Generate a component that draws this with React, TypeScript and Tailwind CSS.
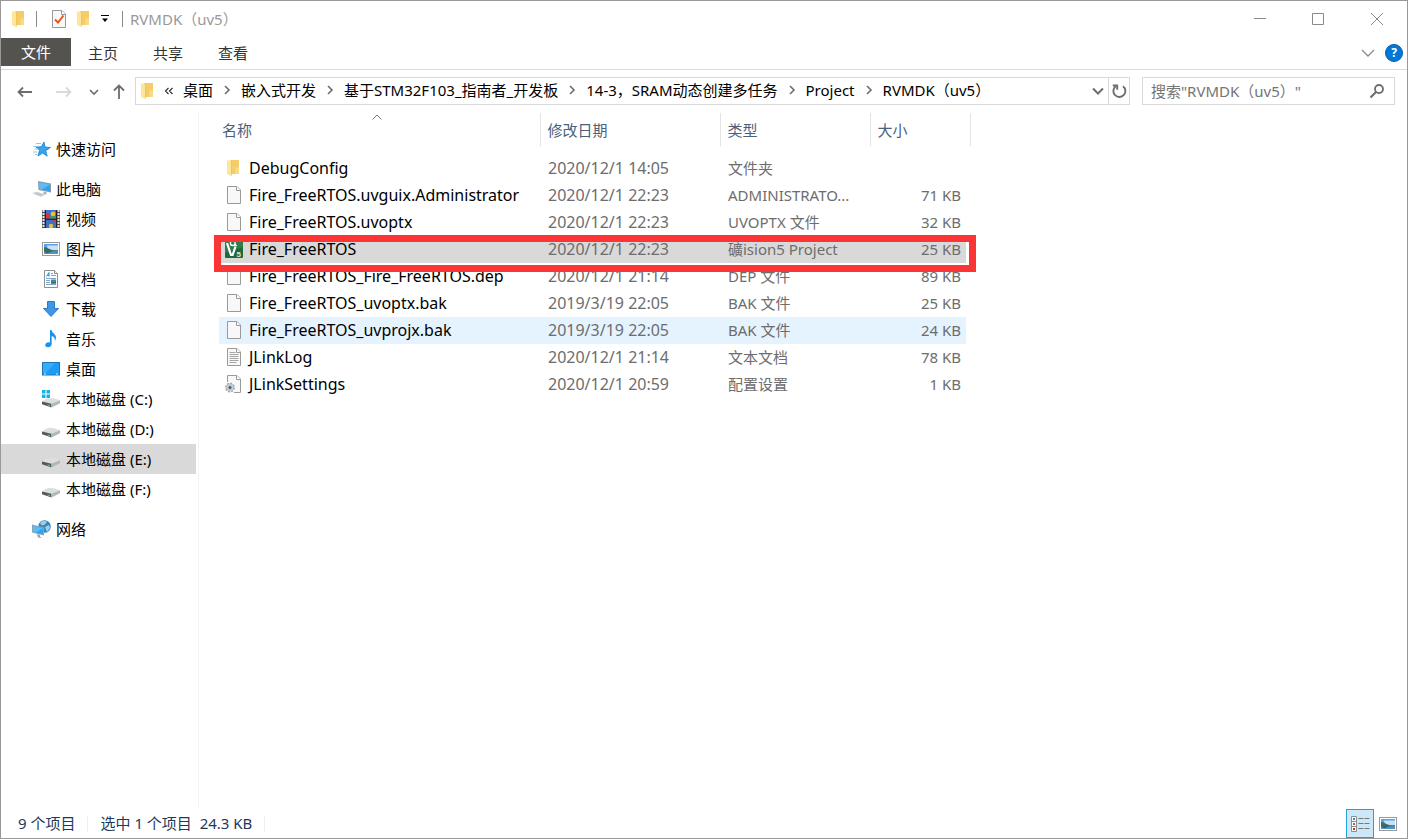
import { Fragment } from 'react';
import type { ReactNode } from 'react';
import { clsx } from 'clsx';

type IconProps = { className?: string };

function FolderIcon({ className }: IconProps) {
  return (
    <svg viewBox="0 0 18 18" className={clsx('h-[18px] w-[18px] shrink-0', className)} aria-hidden="true">
      <path d="M5 1h9v13l-1 1H5z" fill="#f5cd68" />
      <path d="M10.5 8.500h3.500V15h-3.500z" fill="#f8da87" />
      <path d="M2 1l4 1.200V17l-4-2z" fill="#fde59b" />
      <path d="M6 2.200V17l.6-.6V2.400z" fill="#edbd50" />
    </svg>
  );
}

function SheetIcon({ children }: { children?: ReactNode }) {
  return (
    <svg viewBox="0 0 18 18" className="h-[18px] w-[18px] shrink-0" aria-hidden="true">
      <path d="M2.500.5h9.500l3.500 3.500v13.500h-13z" fill="#f8f8f8" stroke="#9a9a9a" />
      <path d="M11.500.5v4h4" fill="#fff" stroke="#9a9a9a" />
      {children}
    </svg>
  );
}

const TextSheetIcon = () => (
  <SheetIcon>
    <path d="M4.500 4.500h6M4.500 6.500h9M4.500 8.500h9M4.500 10.500h9M4.500 12.500h9M4.500 14.500h7" stroke="#a5a5a5" />
  </SheetIcon>
);

const ConfigSheetIcon = () => (
  <SheetIcon>
    <path d="M0 7h9v11H0z" fill="#fff" />
    <circle cx="5" cy="12.500" r="4" fill="#b9c2ca" stroke="#9aa5ad" strokeWidth="2" strokeDasharray="1.800 1.300" />
    <circle cx="5" cy="12.500" r="3.600" fill="#c3ccd3" />
    <circle cx="5" cy="12.500" r="1.500" fill="#4c5a66" />
  </SheetIcon>
);

function UVisionIcon() {
  return (
    <svg viewBox="0 0 18 18" className="h-[18px] w-[18px] shrink-0" aria-hidden="true">
      <rect width="18" height="18" rx="1" fill="#21683c" />
      <path d="M0 0h18v7L0 13z" fill="#2f7d4b" />
      <path d="M2 3l4 12h1.600L10.500 6.500" fill="none" stroke="#fff" strokeWidth="2.200" />
      <path d="M5.500 0v4c0 2 4.500 2 4.500 0V0m0 4l1.500 2" fill="none" stroke="#fff" strokeWidth="1.400" />
      <text x="11.500" y="16.500" fontSize="8" fontWeight="700" fill="#cfe8d8" fontFamily="Liberation Sans, sans-serif">
        5
      </text>
    </svg>
  );
}

function StarIcon() {
  return (
    <svg viewBox="0 0 20 18" className="h-[18px] w-5 shrink-0" aria-hidden="true">
      <path
        d="M12 2l1 5 5.500.5-4.800 3.200 1.500 5.500-4.500-3.200-4.800 3 1.600-5.500L4 7l5.200-.2z"
        fill="#35a4ee"
        stroke="#1c7fc8"
        strokeWidth="0.8"
      />
      <path d="M4 3.500h5M1.500 6.500h3M2.500 9h4M1 12h4.500M3 14.500h2" stroke="#8cc9f2" />
    </svg>
  );
}

function PcIcon() {
  return (
    <svg viewBox="0 0 20 18" className="h-[18px] w-5 shrink-0" aria-hidden="true">
      <path d="M6 1l13 2.500v9L6.500 10z" fill="#8d9aa5" />
      <path d="M7 2.300l11 2.100v6.900L7.300 9z" fill="#2aa3f0" />
      <path d="M7 2.300l11 2.100-8 5.200L7.300 9z" fill="#5bbcf7" />
      <path d="M11.500 11.400l3 .6v2.600l-3-.6z" fill="#a9b3ba" />
      <path d="M0 13l5-1.200 8.500 2.700L9 17z" fill="#d3d7da" />
      <path d="M2 13.400l7 2.200M4 12.700l7.500 2.200" stroke="#aeb5ba" strokeWidth="0.6" />
    </svg>
  );
}

function VideoIcon() {
  return (
    <svg viewBox="0 0 18 18" className="h-[18px] w-[18px] shrink-0" aria-hidden="true">
      <rect width="18" height="18" fill="#4a4a4a" />
      <path d="M1.500 0v18M16.500 0v18" stroke="#e4e4e4" strokeWidth="2" strokeDasharray="2 1" />
      <path d="M4 0h10v8.500H4zM4 10h10v8H4z" fill="#3d6fd0" />
      <path d="M4 4h4v4.500H4z" fill="#d0393b" />
      <circle cx="11" cy="4" r="2.400" fill="#e8c235" />
      <path d="M8 6.500h6v2H8z" fill="#4c9a46" />
      <circle cx="12" cy="11" r="1.400" fill="#d0393b" />
      <circle cx="9" cy="16" r="2.200" fill="#e8c235" />
      <path d="M3.500 0v18M14.500 0v18M4 9.300h10" stroke="#222" />
    </svg>
  );
}

function PictureIcon() {
  return (
    <svg viewBox="0 0 18 18" className="h-[18px] w-[18px] shrink-0" aria-hidden="true">
      <rect x="0.500" y="2.500" width="17" height="13" fill="#fff" stroke="#9a9a9a" />
      <path d="M2 4h14v10H2z" fill="#5aa2ea" />
      <path d="M5 5.500h11v4.500H6z" fill="#c5e2f8" />
      <path d="M2 7c3 .5 6 2.500 9 3.200l5 .3v1H2z" fill="#3f6d5c" />
      <path d="M2 11.400h14V14H2z" fill="#4f93bf" />
      <path d="M2 11.200h9L5 13z" fill="#2d5560" />
    </svg>
  );
}

function DocumentIcon() {
  return (
    <svg viewBox="0 0 18 18" className="h-[18px] w-[18px] shrink-0" aria-hidden="true">
      <path d="M2.500.5h10l3 3v14h-13z" fill="#fdfdfd" stroke="#8f8f8f" />
      <path d="M12.500.5v3h3" fill="#eee" stroke="#8f8f8f" />
      <path d="M4.500 6.500l2.500-4v4m-1.500-1.200h1.500" fill="none" stroke="#2a8bd4" />
      <path d="M9 3.500h2M9 5.500h5M4 8.500h10M4 10.500h4M4 12.500h4M4 14.500h10" stroke="#7aa7c9" />
      <path d="M9 9.500h5v4H9z" fill="#3a86b8" />
      <path d="M9 12h5v1.500H9z" fill="#386b56" />
    </svg>
  );
}

function DownloadIcon() {
  return (
    <svg viewBox="0 0 18 18" className="h-[18px] w-[18px] shrink-0" aria-hidden="true">
      <path d="M5.500 1.500h7v7h4L9 16.500 1.500 8.500h4z" fill="#3d96e6" stroke="#2f7cc4" />
    </svg>
  );
}

function MusicIcon() {
  return (
    <svg viewBox="0 0 18 18" className="h-[18px] w-[18px] shrink-0" aria-hidden="true">
      <path
        d="M8 0h1.500c.5 3 4.500 4 4.500 7.500 0 1.500-.6 2.500-1.200 3.300.4-3-1.300-4.300-3.100-4.800V14c0 2-1.800 3.300-3.800 3.300-1.600 0-2.700-.9-2.700-2.200 0-1.700 1.900-3 4.800-2.700z"
        fill="#1593ee"
      />
    </svg>
  );
}

function DesktopIcon() {
  return (
    <svg viewBox="0 0 18 18" className="h-[18px] w-[18px] shrink-0" aria-hidden="true">
      <rect x="0.500" y="2.500" width="17" height="12.500" fill="#1c9cf5" stroke="#1878bd" />
      <path d="M1 3h12L4 13H1z" fill="#3aabf8" />
      <path d="M2 14h14" stroke="#d5ecfb" strokeDasharray="2 10 2" />
    </svg>
  );
}

function DriveIcon({ system = false }: { system?: boolean }) {
  return (
    <svg viewBox="0 0 18 18" className="h-[18px] w-[18px] shrink-0" aria-hidden="true">
      <path d="M0 11.500c2-1.800 5-3.500 7.500-3.800 3 0 8 1.400 10.500 2.600L9.500 14z" fill="#dcdedf" />
      <path d="M0 11.500L9.500 13.700v3.800L0 14.300z" fill="#55575a" />
      <path d="M9.500 13.700L18 10.300v3l-8.500 4.200z" fill="#b4b7b9" />
      <path d="M5.500 14.200l2.500.7v1.200l-2.500-.7z" fill="#55d46a" />
      {system && (
        <>
          <path d="M0 0h9v8.500H0z" fill="#fff" />
          <path d="M0 0h3.500v3.500H0zM4.500 0H8v3.500H4.500zM0 4.500h3.500V8H0zM4.500 4.500H8V8H4.500z" fill="#12b2ee" />
        </>
      )}
    </svg>
  );
}

function NetworkIcon() {
  return (
    <svg viewBox="0 0 20 18" className="h-[18px] w-5 shrink-0" aria-hidden="true">
      <circle cx="12.500" cy="6.500" r="6.300" fill="#3c87b4" />
      <path d="M8 3c2-2.500 5-2.500 7-1.500l-2 3-3 1zM13 7l4-2 1 3-3 4z" fill="#9fd0e6" />
      <path d="M0 4.500l12 3v8L0 12.500z" fill="#8fa3b3" />
      <path d="M1 5.800l10 2.500v5.900L1 11.700z" fill="#2aa3f0" />
      <path d="M1 5.800l10 2.500-7 4.100-3-.7z" fill="#5bbcf7" />
      <path d="M5 14l3 .8v1.700l2 1.200H6z" fill="#9aa5ad" />
    </svg>
  );
}

function Chevron({ className, direction = 'down' }: IconProps & { direction?: 'down' | 'right' }) {
  return (
    <svg viewBox="0 0 10 10" className={clsx('h-[10px] w-[10px] shrink-0', className)} fill="none" stroke="currentColor" aria-hidden="true">
      {direction === 'down' ? <path d="M1 3l4 4 4-4" /> : <path d="M3 1l4 4-4 4" />}
    </svg>
  );
}

const tabs = ['主页', '共享', '查看'];
const crumbs = ['桌面', '嵌入式开发', '基于STM32F103_指南者_开发板', '14-3，SRAM动态创建多任务', 'Project', 'RVMDK（uv5）'];

const places: { label: string; icon: ReactNode; current?: boolean }[] = [
  { label: '视频', icon: <VideoIcon /> },
  { label: '图片', icon: <PictureIcon /> },
  { label: '文档', icon: <DocumentIcon /> },
  { label: '下载', icon: <DownloadIcon /> },
  { label: '音乐', icon: <MusicIcon /> },
  { label: '桌面', icon: <DesktopIcon /> },
  { label: '本地磁盘 (C:)', icon: <DriveIcon system /> },
  { label: '本地磁盘 (D:)', icon: <DriveIcon /> },
  { label: '本地磁盘 (E:)', icon: <DriveIcon />, current: true },
  { label: '本地磁盘 (F:)', icon: <DriveIcon /> },
];

type FileRow = {
  name: string;
  date: string;
  type: string;
  size?: string;
  icon: ReactNode;
  state?: 'selected' | 'hover';
};

const files: FileRow[] = [
  { name: 'DebugConfig', date: '2020/12/1 14:05', type: '文件夹', icon: <FolderIcon /> },
  { name: 'Fire_FreeRTOS.uvguix.Administrator', date: '2020/12/1 22:23', type: 'ADMINISTRATO...', size: '71 KB', icon: <SheetIcon /> },
  { name: 'Fire_FreeRTOS.uvoptx', date: '2020/12/1 22:23', type: 'UVOPTX 文件', size: '32 KB', icon: <SheetIcon /> },
  { name: 'Fire_FreeRTOS', date: '2020/12/1 22:23', type: '礦ision5 Project', size: '25 KB', icon: <UVisionIcon />, state: 'selected' },
  { name: 'Fire_FreeRTOS_Fire_FreeRTOS.dep', date: '2020/12/1 21:14', type: 'DEP 文件', size: '89 KB', icon: <SheetIcon /> },
  { name: 'Fire_FreeRTOS_uvoptx.bak', date: '2019/3/19 22:05', type: 'BAK 文件', size: '25 KB', icon: <SheetIcon /> },
  { name: 'Fire_FreeRTOS_uvprojx.bak', date: '2019/3/19 22:05', type: 'BAK 文件', size: '24 KB', icon: <SheetIcon />, state: 'hover' },
  { name: 'JLinkLog', date: '2020/12/1 21:14', type: '文本文档', size: '78 KB', icon: <TextSheetIcon /> },
  { name: 'JLinkSettings', date: '2020/12/1 20:59', type: '配置设置', size: '1 KB', icon: <ConfigSheetIcon /> },
];

function TitleBar() {
  return (
    <header className="flex h-[37px] shrink-0 items-center pb-[2px]">
      <FolderIcon className="ml-[9px]" />
      <span className="ml-2 h-4 w-px bg-[#8a8a8a]" />
      <button type="button" aria-label="属性" className="ml-[13px]">
        <SheetIcon>
          <path d="M5 9.500l3 3 5.500-7" fill="none" stroke="#e8541a" strokeWidth="2" />
        </SheetIcon>
      </button>
      <button type="button" aria-label="新建文件夹" className="ml-[7px]">
        <FolderIcon />
      </button>
      <button type="button" aria-label="自定义快速访问工具栏" className="ml-2 text-black">
        <svg viewBox="0 0 8 8" className="h-2 w-2" aria-hidden="true">
          <path d="M0 .5h8" stroke="currentColor" />
          <path d="M1 3.500h6L4 7z" fill="currentColor" />
        </svg>
      </button>
      <span className="ml-[13px] h-4 w-px bg-[#8a8a8a]" />
      <h1 className="ml-[7px] text-[#999]">RVMDK（uv5）</h1>
      <div className="ml-auto flex h-full text-[#8a8a8a]">
        <button type="button" aria-label="最小化" className="flex w-[58px] items-center justify-center">
          <svg viewBox="0 0 12 12" className="h-3 w-3" aria-hidden="true">
            <path d="M0 5.500h12" stroke="currentColor" />
          </svg>
        </button>
        <button type="button" aria-label="最大化" className="flex w-[58px] items-center justify-center">
          <svg viewBox="0 0 12 12" className="h-3 w-3" aria-hidden="true">
            <path d="M.5.5h11v11H.5z" fill="none" stroke="currentColor" />
          </svg>
        </button>
        <button type="button" aria-label="关闭" className="flex w-[60px] items-center justify-center">
          <svg viewBox="0 0 12 12" className="h-3 w-3" aria-hidden="true">
            <path d="M0 0l12 12M12 0L0 12" stroke="currentColor" />
          </svg>
        </button>
      </div>
    </header>
  );
}

function Ribbon() {
  return (
    <nav className="flex h-8 shrink-0 items-start border-b border-[#dadbdc] text-[#333]">
      <button type="button" className="h-7 w-[70px] bg-[#555350] text-white">
        文件
      </button>
      {tabs.map((tab) => (
        <button key={tab} type="button" className="h-[30px] w-[65px] pl-[17px] text-left">
          {tab}
        </button>
      ))}
      <div className="ml-auto flex h-[30px] items-center gap-[10px] pr-1">
        <button type="button" aria-label="展开功能区">
          <svg viewBox="0 0 14 8" className="h-2 w-[14px] text-[#8a8a8a]" fill="none" stroke="currentColor" strokeWidth="1.300" aria-hidden="true">
            <path d="M1 1l6 6 6-6" />
          </svg>
        </button>
        <button
          type="button"
          className="h-[18px] w-[18px] rounded-full border border-[#0a5aa8] bg-[#0078d7] text-xs leading-4 font-bold text-white"
        >
          ?
        </button>
      </div>
    </nav>
  );
}

function AddressRow() {
  return (
    <div className="flex h-[43px] shrink-0 items-start pt-[7px] pr-3 text-[#6d6d6d]">
      <div className="flex h-7 w-[134px] shrink-0 items-center pt-[2px] pl-4">
        <button type="button" aria-label="后退">
          <svg viewBox="0 0 16 14" className="h-[14px] w-4" fill="none" stroke="currentColor" strokeWidth="1.800" aria-hidden="true">
            <path d="M1.500 7H15M6 2.500L1.500 7l4.500 4.500" />
          </svg>
        </button>
        <button type="button" aria-label="前进" className="ml-[23px] text-[#d9d9d9]">
          <svg viewBox="0 0 16 14" className="h-[14px] w-4" fill="none" stroke="currentColor" strokeWidth="1.800" aria-hidden="true">
            <path d="M0 7h14.500M10 2.500L14.500 7 10 11.500" />
          </svg>
        </button>
        <button type="button" aria-label="最近位置" className="ml-[17px]">
          <Chevron className="stroke-[1.600]" />
        </button>
        <button type="button" aria-label="上移" className="ml-[13px]">
          <svg viewBox="0 0 14 16" className="h-4 w-[14px]" fill="none" stroke="currentColor" strokeWidth="1.800" aria-hidden="true">
            <path d="M7 1.500V15M2 6.500l5-5 5 5" />
          </svg>
        </button>
      </div>

      <div className="flex h-7 min-w-0 flex-1 items-center border border-[#d9d9d9] text-black">
        <FolderIcon className="ml-[3px]" />
        <svg viewBox="0 0 10 10" className="ml-[7px] h-[10px] w-[10px] shrink-0" fill="none" stroke="#333" strokeWidth="1.200" aria-hidden="true">
          <path d="M4.500 2L1.500 5l3 3M8.500 2L5.500 5l3 3" />
        </svg>
        <div className="ml-[9px] flex items-center pb-[2px] whitespace-nowrap">
          {crumbs.map((crumb, i) => (
            <Fragment key={crumb}>
              {i > 0 && (
                <span className="flex w-7 justify-center text-[#6d6d6d]">
                  <Chevron direction="right" className="stroke-[1.600]" />
                </span>
              )}
              <button type="button">{crumb}</button>
            </Fragment>
          ))}
        </div>
        <button type="button" aria-label="以前的位置" className="ml-auto pr-1 text-[#6d6d6d]">
          <svg viewBox="0 0 12 10" className="h-[10px] w-3" fill="none" stroke="currentColor" strokeWidth="2" aria-hidden="true">
            <path d="M1 2.500l5 5 5-5" />
          </svg>
        </button>
        <button
          type="button"
          aria-label="刷新"
          className="flex h-full w-[21px] items-center justify-center border-l border-[#d9d9d9] text-[#6d6d6d]"
        >
          <svg viewBox="0 0 16 16" className="h-4 w-4" fill="none" stroke="currentColor" strokeWidth="1.900" aria-hidden="true">
            <path d="M12 3.200a6 6 0 1 1-7.500.2M1.800 2.500h4.400v4.300" />
          </svg>
        </button>
      </div>

      <label className="ml-3 flex h-7 w-[253px] shrink-0 items-center border border-[#d9d9d9] px-2">
        <input
          type="text"
          aria-label="搜索"
          placeholder='搜索"RVMDK（uv5）"'
          className="min-w-0 flex-1 outline-none placeholder:text-[#757575]"
        />
        <svg viewBox="0 0 16 16" className="mr-px h-4 w-4" fill="none" stroke="currentColor" aria-hidden="true">
          <circle cx="10" cy="6" r="4" strokeWidth="1.800" />
          <path d="M7 9l-5.500 5.500" strokeWidth="2.200" />
        </svg>
      </label>
    </div>
  );
}

function Sidebar() {
  return (
    <nav className="w-[195px] shrink-0 pt-[21px] text-black">
      <a href="#quick" className="mb-[10px] flex h-[30px] items-center gap-1 pl-[31px]">
        <StarIcon />
        快速访问
      </a>
      <a href="#pc" className="flex h-[30px] items-center gap-1 pl-[31px]">
        <PcIcon />
        此电脑
      </a>
      {places.map((place) => (
        <a
          key={place.label}
          href="#place"
          aria-current={place.current ? 'location' : undefined}
          className={clsx('flex h-[30px] items-center gap-[6px] pl-[41px]', place.current && 'bg-[#d9d9d9]')}
        >
          {place.icon}
          {place.label}
        </a>
      ))}
      <a href="#network" className="mt-[10px] flex h-[30px] items-center gap-1 pl-[31px]">
        <NetworkIcon />
        网络
      </a>
    </nav>
  );
}

function FileList() {
  return (
    <main className="relative min-w-0 flex-1 pl-5">
      <table className="w-[751px] table-fixed border-collapse text-left">
        <colgroup>
          <col className="w-[321px]" />
          <col className="w-[180px]" />
          <col className="w-[150px]" />
          <col className="w-[96px]" />
          <col className="w-[4px]" />
        </colgroup>
        <thead className="text-[#4c607a]">
          <tr className="h-[33px] [&>th]:border-r [&>th]:border-[#e3e3e3] [&>th]:font-normal">
            <th className="relative pl-[3px]" aria-sort="ascending">
              名称
              <svg viewBox="0 0 10 6" className="absolute top-px left-[153px] h-[6px] w-[10px]" fill="none" stroke="#7a7a7a" aria-hidden="true">
                <path d="M.5 5.500L5 1l4.500 4.500" />
              </svg>
            </th>
            <th className="pl-[7px]">修改日期</th>
            <th className="pl-[7px]">类型</th>
            <th className="pl-[7px]" colSpan={2}>
              大小
            </th>
          </tr>
        </thead>
        <tbody className="text-[#6d6d6d]">
          <tr className="h-[9px]" />
          {files.map((file) => (
            <tr
              key={file.name}
              className={clsx(
                'h-[27px] whitespace-nowrap',
                file.state === 'selected' && '[&>td]:bg-[#d9d9d9]',
                file.state === 'hover' && '[&>td]:bg-[#e5f3ff]',
              )}
            >
              <td className="p-0 pb-[2px] pl-[6px] text-base leading-5 text-black">
                <span className="flex items-center gap-[6px]">
                  {file.icon}
                  {file.name}
                </span>
              </td>
              <td className="p-0 pb-[2px] pl-2 text-base leading-5">{file.date}</td>
              <td className="p-0 pb-[2px] pl-2">{file.type}</td>
              <td className="p-0 pr-[5px] pb-[2px] text-right">{file.size}</td>
            </tr>
          ))}
        </tbody>
      </table>
      {/* annotation frame around the project file */}
      <div className="pointer-events-none absolute top-[122px] left-[15px] h-[37px] w-[762px] border-7 border-[#fb3535]" />
    </main>
  );
}

function StatusBar() {
  return (
    <footer className="flex h-[29px] shrink-0 items-center text-[#1e395b]">
      <span className="pb-[2px] pl-[17px]">9 个项目</span>
      <span className="mx-3 h-4 w-px bg-[#eee]" />
      <span className="pb-[2px] whitespace-pre">选中 1 个项目  24.3 KB</span>
      <span className="mx-3 h-4 w-px bg-[#eee]" />
      <div className="ml-auto flex h-full items-center pr-[10px]">
        <button type="button" aria-label="详细信息" className="flex h-full w-7 items-center justify-center border border-[#26a0da] bg-[#cce8f6]">
          <svg viewBox="0 0 20 16" className="h-4 w-5" aria-hidden="true">
            <path d="M1.500.5h5v15h-5zM1.500 5.500h5M1.500 10.500h5" fill="#fff" stroke="#8f8f8f" />
            <path d="M3 2h2v2H3z" fill="#3f86c4" />
            <path d="M3 7h2v2H3z" fill="#c45a3a" />
            <path d="M3 12h2v2H3z" fill="#d62f20" />
            <path d="M8.500 2.500h5M14.500 2.500h5M8.500 7.500h5M14.500 7.500h5M8.500 12.500h5M14.500 12.500h5" stroke="#777" />
          </svg>
        </button>
        <button type="button" aria-label="大图标" className="ml-[5px]">
          <PictureIcon />
        </button>
      </div>
    </footer>
  );
}

export default function App() {
  return (
    <div className="flex min-h-screen flex-col border border-[#999] bg-white font-['Noto_Sans','Noto_Sans_CJK_SC',sans-serif] text-[15px] leading-5">
      <TitleBar />
      <Ribbon />
      <AddressRow />
      <div className="flex flex-1">
        <Sidebar />
        <span className="ml-[2px] w-px bg-[#f3f3f3]" />
        <FileList />
      </div>
      <StatusBar />
    </div>
  );
}
